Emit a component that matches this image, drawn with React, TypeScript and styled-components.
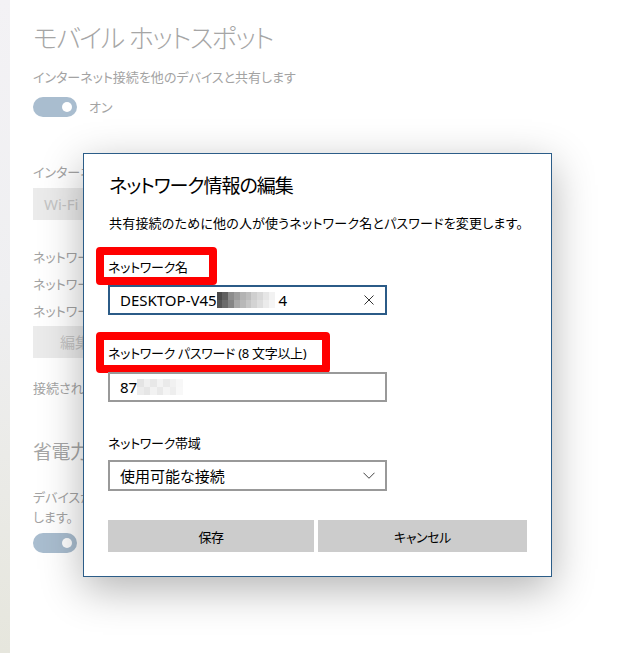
import React from "react";
import styled, { createGlobalStyle } from "styled-components";

const Global = createGlobalStyle`
  html, body { margin: 0; padding: 0; background: #fff; }
  body {
    font-family: "Noto Sans", "Noto Sans CJK JP", sans-serif;
    font-feature-settings: "palt";
  }
  #root { width: 620px; height: 653px; overflow: hidden; }
`;

const Page = styled.div`
  position: relative;
  display: flex;
  width: 620px;
  height: 653px;
  overflow: hidden;
  background: #fff;
`;

const SideStrip = styled.div`
  flex: none;
  width: 10px;
  background: linear-gradient(180deg, #f3f2f5 0%, #efeff1 45%, #e6e6dd 100%);
`;

const Settings = styled.main`
  flex: 1;
  display: flex;
  flex-direction: column;
  align-items: flex-start;
  padding: 20px 0 0 23px;
  color: #a3a3a3;
  font-size: 13px;
  letter-spacing: 0;
  line-height: 20px;
  white-space: nowrap;
  overflow: hidden;
`;

const PageTitle = styled.h1`
  margin: 0;
  font-size: 26px;
  letter-spacing: -1.5px;
  line-height: 36px;
  font-weight: 300;
  color: #a6a6a6;
`;

const SectionTitle = styled.h2`
  margin: 40px 0 0;
  font-size: 19px;
  letter-spacing: -0.5px;
  line-height: 28px;
  font-weight: 400;
  color: #a6a6a6;
`;

const Text = styled.div<{ $mt?: number; $lh?: number }>`
  margin-top: ${(p) => p.$mt ?? 0}px;
  line-height: ${(p) => p.$lh ?? 20}px;
`;

const ToggleRow = styled.div<{ $mt: number }>`
  display: flex;
  align-items: center;
  gap: 12px;
  margin-top: ${(p) => p.$mt}px;
`;

const Toggle = styled.div`
  position: relative;
  width: 44px;
  height: 20px;
  border-radius: 10px;
  background: #a9bdcf;
  &::after {
    content: "";
    position: absolute;
    right: 5px;
    top: 5px;
    width: 10px;
    height: 10px;
    border-radius: 50%;
    background: #fff;
  }
`;

const GhostBox = styled.div<{ $mt: number; $w: number; $center?: boolean }>`
  margin-top: ${(p) => p.$mt}px;
  width: ${(p) => p.$w}px;
  height: 32px;
  box-sizing: border-box;
  display: flex;
  align-items: center;
  justify-content: ${(p) => (p.$center ? "center" : "flex-start")};
  padding-left: ${(p) => (p.$center ? 0 : 11)}px;
  background: #ebebeb;
  color: #c4c4c4;
  font-size: 15px;
  letter-spacing: 0;
`;

/* ---------- dialog ---------- */

const Dialog = styled.section`
  position: absolute;
  left: 83px;
  top: 153px;
  width: 469px;
  height: 424px;
  box-sizing: border-box;
  display: flex;
  flex-direction: column;
  align-items: flex-start;
  padding: 18px 24px 0 24px;
  background: #fff;
  border: 1px solid #2c5d88;
  box-shadow: 0 12px 40px rgba(0, 0, 0, 0.3);
  color: #000;
  font-size: 13px;
  line-height: 20px;
  white-space: nowrap;
`;

const DialogTitle = styled.h2`
  margin: 0 0 0 1px;
  font-size: 19px;
  letter-spacing: -1px;
  line-height: 28px;
  font-weight: 400;
`;

const Description = styled.p`
  margin: 13px 0 0 1px;
  font-size: 13px;
  letter-spacing: 0.2px;
  line-height: 20px;
`;

const FieldLabel = styled.label<{ $mt: number; $mark?: boolean; $w?: number; $h?: number }>`
  display: flex;
  align-items: center;
  box-sizing: content-box;
  margin-top: ${(p) => p.$mt}px;
  font-size: 13px;
  letter-spacing: -0.3px;
  line-height: 20px;
  ${(p) =>
    p.$mark
      ? `
    margin-left: -12px;
    padding: 1px 0 0 4px;
    width: ${p.$w}px;
    height: ${p.$h}px;
    border: 8px solid #ff0000;
    border-radius: 4px;
  `
      : ""}
`;

const InputBox = styled.div<{ $focus?: boolean; $mt?: number; $h?: number }>`
  display: flex;
  align-items: center;
  box-sizing: border-box;
  width: 279px;
  height: ${(p) => p.$h ?? 30}px;
  margin-top: ${(p) => p.$mt ?? 0}px;
  padding: 0 10px;
  border: 2px solid ${(p) => (p.$focus ? "#2b5b87" : "#999999")};
  background: #fff;
  font-size: 15px;
  color: #000;
`;

const Value = styled.span`
  display: flex;
  align-items: center;
  flex: 1;
  white-space: nowrap;
`;

const Mosaic = styled.span<{ $cols: number; $cw: number; $ch: number }>`
  display: inline-grid;
  grid-template-columns: repeat(${(p) => p.$cols}, ${(p) => p.$cw}px);
  grid-auto-rows: ${(p) => p.$ch}px;
  margin: 0 4px 0 0;
`;

const Cell = styled.span``;

const IconSlot = styled.span`
  display: flex;
  align-items: center;
  justify-content: center;
  width: 12px;
  height: 12px;
`;

const ButtonRow = styled.div`
  display: grid;
  grid-template-columns: 206px 1fr;
  gap: 4px;
  width: 100%;
  margin-top: 29px;
`;

const DialogButton = styled.button`
  height: 32px;
  border: none;
  background: #cccccc;
  color: #000;
  font-family: inherit;
  font-feature-settings: "palt";
  font-size: 13px;
  letter-spacing: -0.4px;
  padding: 0;
`;

const nameRow1 = ["#4a4a4a", "#5f5f5f", "#8c8c8c", "#9d9d9d", "#b3b3b3", "#bdbdbd", "#cfcfcf", "#d9d9d9", "#e6e6e6", "#f2f2f2"];
const nameRow2 = ["#555555", "#6b6b6b", "#858585", "#a8a8a8", "#b8b8b8", "#c6c6c6", "#d3d3d3", "#dedede", "#ebebeb", "#f5f5f5"];
const passRow1 = ["#e4e4e4", "#f0f0f0", "#e8e8e8", "#f3f3f3", "#eaeaea", "#f1f1f1", "#f7f7f7"];
const passRow2 = ["#ececec", "#e6e6e6", "#f2f2f2", "#e9e9e9", "#f4f4f4", "#eeeeee", "#f8f8f8"];

function Pixels({ rows, cw, ch }: { rows: string[][]; cw: number; ch: number }) {
  return (
    <Mosaic $cols={rows[0].length} $cw={cw} $ch={ch}>
      {rows.flat().map((c, i) => (
        <Cell key={i} style={{ background: c }} />
      ))}
    </Mosaic>
  );
}

export default function App() {
  return (
    <Page>
      <Global />
      <SideStrip />
      <Settings>
        <PageTitle>モバイル ホットスポット</PageTitle>
        <Text $mt={11}>インターネット接続を他のデバイスと共有します</Text>
        <ToggleRow $mt={10}>
          <Toggle />
          <span>オン</span>
        </ToggleRow>
        <Text $mt={45}>インターネット接続を共有する</Text>
        <GhostBox $mt={6} $w={180}>Wi-Fi</GhostBox>
        <Text $mt={24} $lh={27}>ネットワーク名:</Text>
        <Text $lh={27}>ネットワーク パスワード:</Text>
        <Text $lh={27}>ネットワーク帯域:</Text>
        <GhostBox $mt={1} $w={84} $center>編集</GhostBox>
        <Text $mt={20}>接続されているデバイス: 0/8</Text>
        <SectionTitle>省電力</SectionTitle>
        <Text $mt={21}>
          デバイスが接続されていないときは、モバイル ホットスポットを自動的に
          <br />
          します。
        </Text>
        <ToggleRow $mt={6}>
          <Toggle />
          <span>オン</span>
        </ToggleRow>
      </Settings>

      <Dialog role="dialog">
        <DialogTitle>ネットワーク情報の編集</DialogTitle>
        <Description>共有接続のために他の人が使うネットワーク名とパスワードを変更します。</Description>

        <FieldLabel $mt={14} $mark $w={101} $h={21}>ネットワーク名</FieldLabel>
        <InputBox $focus>
          <Value>
            DESKTOP-V45
            <Pixels rows={[nameRow1, nameRow2]} cw={5.8} ch={8} />
            4
          </Value>
          <IconSlot>
            <svg width="10" height="10" viewBox="0 0 10 10">
              <path d="M0.5 0.5 L9.5 9.5 M9.5 0.5 L0.5 9.5" stroke="#333" strokeWidth="1" fill="none" />
            </svg>
          </IconSlot>
        </InputBox>

        <FieldLabel $mt={17} $mark $w={214} $h={24}>ネットワーク パスワード (8 文字以上)</FieldLabel>
        <InputBox $mt={-1}>
          <Value>
            87
            <Pixels rows={[passRow1, passRow2]} cw={6.5} ch={8} />
          </Value>
        </InputBox>

        <FieldLabel $mt={31}>ネットワーク帯域</FieldLabel>
        <InputBox $mt={7} $h={31}>
          <Value>使用可能な接続</Value>
          <IconSlot>
            <svg width="13" height="7" viewBox="0 0 13 7">
              <path d="M0.5 0.5 L6.5 6.5 L12.5 0.5" stroke="#333" strokeWidth="1" fill="none" />
            </svg>
          </IconSlot>
        </InputBox>

        <ButtonRow>
          <DialogButton>保存</DialogButton>
          <DialogButton>キャンセル</DialogButton>
        </ButtonRow>
      </Dialog>
    </Page>
  );
}
